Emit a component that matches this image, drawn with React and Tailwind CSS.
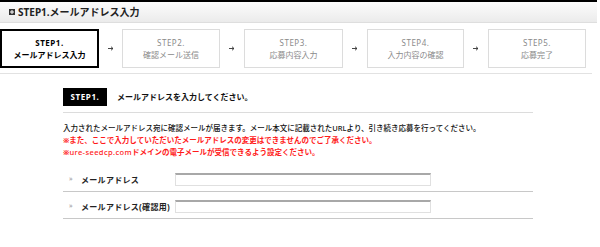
import React from "react";

const FONT = { fontFamily: '"Noto Sans", "Noto Sans CJK JP", sans-serif' };

function Arrow({ w = "w-[24px]" }) {
  return (
    <div className={`${w} flex items-center justify-center`}>
      <svg width="6" height="5" viewBox="0 0 6 5">
        <path d="M0 2.5H5M3 0.7L5 2.5L3 4.3" stroke="#333" strokeWidth="0.9" fill="none" />
      </svg>
    </div>
  );
}

function Step({ n, label, active, w = "w-[98px]" }) {
  return (
    <div
      className={`${w} h-[39px] flex flex-col items-center justify-center text-[8px] leading-[12px] ${
        active ? "border-2 border-black text-black font-bold" : "border border-[#dcdcdc] text-[#8a8a8a]"
      }`}
    >
      <div className="tracking-[0.5px]">STEP{n}.</div>
      <div>{label}</div>
    </div>
  );
}

function Row({ label }) {
  return (
    <div className="flex items-start h-[27px] pt-[8px] border-b border-[#c8c8c8]">
      <div className="w-[112px] flex items-center h-[13px] pl-[6px]">
        <span className="text-[7px] text-[#999] w-[12px]">»</span>
        <span className="text-[8px] font-bold text-[#222] tracking-[0.3px]">{label}</span>
      </div>
      <div className="w-[256px] h-[13px] border-t-2 border-t-[#a8a8a8] border-x border-b border-x-[#e0e0e0] border-b-[#e0e0e0] bg-white" />
    </div>
  );
}

export default function App() {
  return (
    <div className="w-[600px] h-[247px] bg-white overflow-hidden" style={FONT}>
      <div className="w-[597px] h-[23px] border-t-2 border-black border-b border-b-[#dedede] bg-gradient-to-b from-[#fcfcfc] to-[#ebebeb] flex items-center pl-[9px]">
        <svg width="6" height="6" viewBox="0 0 6 6" className="mr-[3px]">
          <rect x="0" y="0" width="6" height="6" fill="#333" />
          <path d="M3 1V5M1 3H5" stroke="#fff" strokeWidth="1" />
        </svg>
        <span className="text-[10px] font-bold text-[#222]">STEP1.メールアドレス入力</span>
      </div>

      <div className="flex items-center mt-[6px]">
        <Step n={1} label="メールアドレス入力" active w="w-[99px]" />
        <Arrow w="w-[23px]" />
        <Step n={2} label="確認メール送信" />
        <Arrow />
        <Step n={3} label="応募内容入力" w="w-[99px]" />
        <Arrow />
        <Step n={4} label="入力内容の確認" w="w-[97px]" />
        <Arrow />
        <Step n={5} label="応募完了" />
      </div>
      <div className="w-[592px] mt-[5px] border-b border-[#e2e2e2]" />

      <div className="ml-[63px] w-[470px]">
        <div className="flex items-center mt-[14px] pb-[6px] border-b border-[#dcdcdc]">
          <div className="w-[44px] h-[18px] bg-black text-white text-[8px] font-bold flex items-center justify-center tracking-[0.6px]">
            STEP1.
          </div>
          <div className="ml-[10px] text-[8px] font-bold text-[#111]">メールアドレスを入力してください。</div>
        </div>

        <div className="mt-[9px] text-[7.5px] leading-[12px]">
          <div className="text-[#111] font-medium">
            入力されたメールアドレス宛に確認メールが届きます。メール本文に記載されたURLより、引き続き応募を行ってください。
          </div>
          <div className="text-[#ff1a1a] font-bold">
            ※また、ここで入力していただいたメールアドレスの変更はできませんのでご了承ください。
          </div>
          <div className="text-[#ff1a1a] font-bold">
            ※<span className="tracking-[0.4px] font-medium">ure-seedcp.com</span>ドメインの電子メールが受信できるよう設定ください。
          </div>
        </div>

        <div className="mt-[7px]">
          <Row label="メールアドレス" />
          <Row label="メールアドレス(確認用)" />
        </div>
      </div>
    </div>
  );
}
